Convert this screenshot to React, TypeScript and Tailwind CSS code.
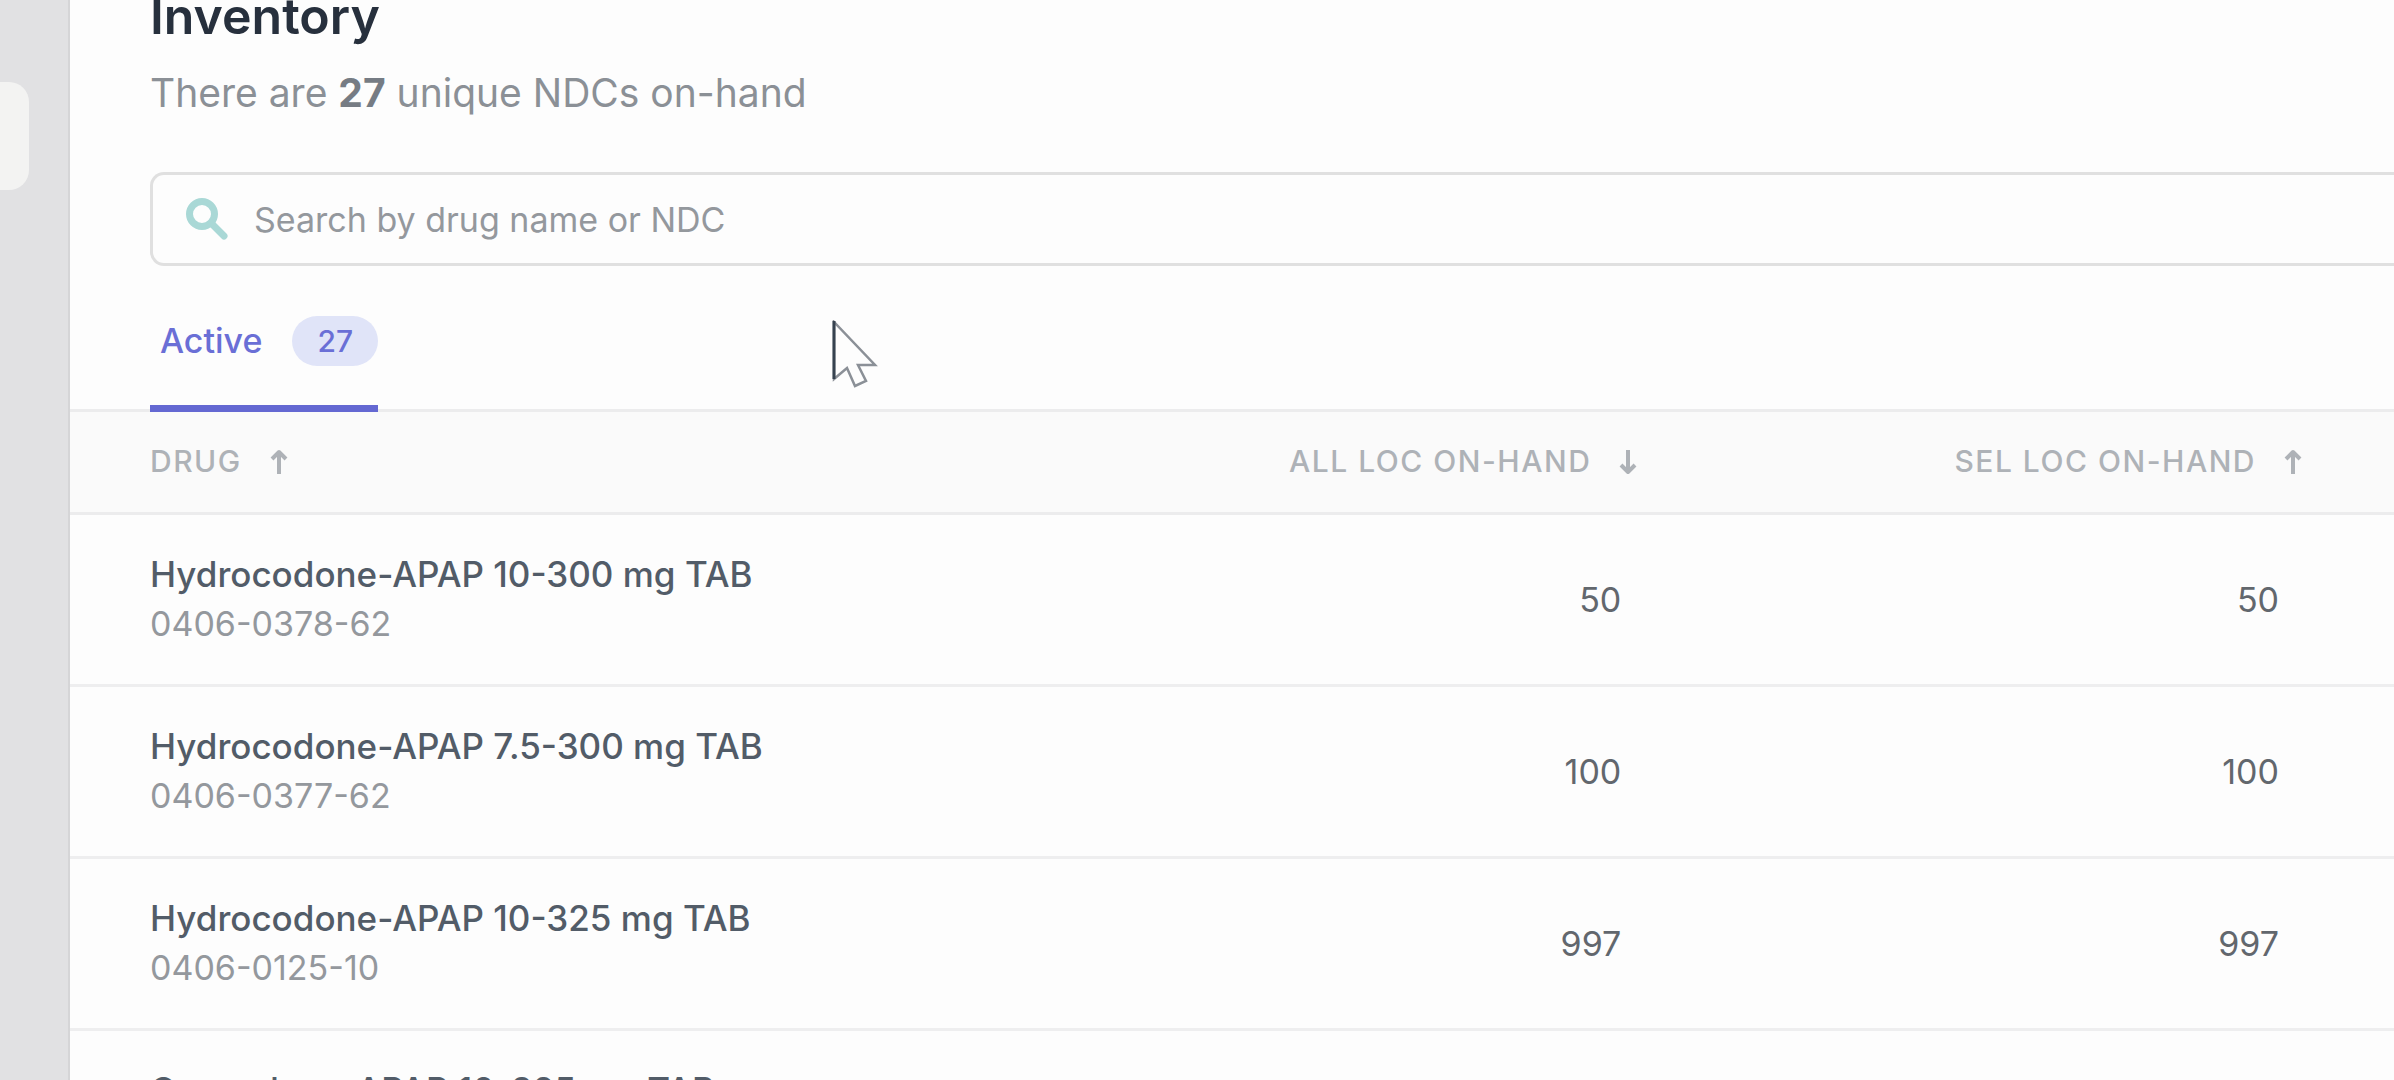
import { useState } from "react";

interface Drug {
  name: string;
  ndc: string;
  allLoc: number;
  selLoc: number;
}

const drugs: Drug[] = [
  { name: "Hydrocodone-APAP 10-300 mg TAB", ndc: "0406-0378-62", allLoc: 50, selLoc: 50 },
  { name: "Hydrocodone-APAP 7.5-300 mg TAB", ndc: "0406-0377-62", allLoc: 100, selLoc: 100 },
  { name: "Hydrocodone-APAP 10-325 mg TAB", ndc: "0406-0125-10", allLoc: 997, selLoc: 997 },
  { name: "Oxycodone-APAP 10-325 mg TAB", ndc: "0406-0523-01", allLoc: 100, selLoc: 100 },
];

const SortArrow = ({ down = false }: { down?: boolean }) => (
  <svg viewBox="0 0 18 26" className={down ? "w-[18px] h-[26px] rotate-180" : "w-[18px] h-[26px]"} fill="none" stroke="currentColor" strokeWidth="4" aria-hidden="true">
    <path d="M9 25V3" />
    <path d="M2 10l7-7 7 7" strokeLinejoin="round" />
  </svg>
);

const SearchIcon = () => (
  <svg viewBox="0 0 42 42" className="w-[42px] h-[42px] flex-shrink-0 text-[#a9d8d6]" fill="none" stroke="currentColor" aria-hidden="true">
    <circle cx="16" cy="16" r="12.5" strokeWidth="7" />
    <path d="M25 25l13 13" strokeWidth="7" strokeLinecap="round" />
  </svg>
);

const Pointer = () => (
  <svg viewBox="0 0 46 68" className="absolute left-[832px] top-[320px] w-[46px] h-[68px] pointer-events-none" fill="#fdfdfd" aria-hidden="true">
    <path d="M2 2v57l13-11 8 18 11-5-8-16h17z" stroke="#8b9097" strokeWidth="2.5" />
    <path d="M2 1v58" stroke="#36424f" strokeWidth="3" />
  </svg>
);

const DrugRow = ({ drug }: { drug: Drug }) => (
  <tr className="h-[172px] border-b-[3px] border-[#eeeeef]">
    <td className="pl-20">
      <p className="text-[35px] leading-[50px] font-medium text-[#525c68]">{drug.name}</p>
      <p className="text-[34px] leading-[50px] text-[#94989d]">{drug.ndc}</p>
    </td>
    <td className="pr-[115px] text-right text-[34px] text-[#62676d]">{drug.allLoc}</td>
    <td className="pr-[115px] text-right text-[34px] text-[#62676d]">{drug.selLoc}</td>
  </tr>
);

const App = () => {
  const [query, setQuery] = useState("");

  return (
    <div className="relative flex h-screen overflow-hidden bg-[#fdfdfd] font-['Inter',sans-serif]">
      <aside className="w-[70px] flex-shrink-0 border-r-2 border-[#d5d5d7] bg-[#e1e1e3] pt-[82px]">
        <button type="button" aria-label="Inventory" className="block h-[108px] w-[29px] rounded-r-[20px] bg-[#f3f3f2]" />
      </aside>
      <main className="min-w-0 flex-1">
        <header className="pl-20">
          <h1 className="text-[50px] leading-8 font-semibold text-[#27303d]">Inventory</h1>
          <p className="mt-[31px] text-[39px] leading-[60px] text-[#8b9096]">
            There are <strong className="font-bold text-[#767c84]">27</strong> unique NDCs on-hand
          </p>
          <label className="mt-[49px] flex h-[94px] items-center gap-[26px] rounded-l-[14px] border-[3px] border-r-0 border-[#e0e0e0] pl-[33px]">
            <SearchIcon />
            <input
              type="text"
              value={query}
              onChange={(e) => setQuery(e.target.value)}
              placeholder="Search by drug name or NDC"
              aria-label="Search by drug name or NDC"
              className="min-w-0 flex-1 bg-transparent text-[34px] text-[#525c68] outline-none placeholder:text-[#94989d]"
            />
          </label>
        </header>
        <nav className="flex border-b-[3px] border-[#ececed] pl-20">
          <button type="button" className="-mb-[3px] flex items-center gap-[30px] border-b-[7px] border-[#6468d2] pt-[50px] pb-[39px] pl-[10px] text-[34px] leading-[50px] font-medium text-[#6a6fd6]">
            Active
            <span className="rounded-full bg-[#e0e4f8] px-[25px] text-[30px] leading-[50px]">27</span>
          </button>
        </nav>
        <table className="w-full table-fixed border-collapse">
          <thead>
            <tr className="h-[101px] border-b-[3px] border-[#ececed] bg-[#fafafa] text-[30px] text-[#aeb2b7]">
              <th scope="col" className="pl-20">
                <button type="button" className="flex items-center gap-[28px] font-medium tracking-wider">
                  DRUG
                  <SortArrow />
                </button>
              </th>
              <th scope="col" className="w-[28.3%] pr-[99px]">
                <button type="button" className="ml-auto flex items-center gap-[28px] font-medium tracking-wider whitespace-nowrap">
                  ALL LOC ON-HAND
                  <SortArrow down />
                </button>
              </th>
              <th scope="col" className="w-[28.3%] pr-[92px]">
                <button type="button" className="ml-auto flex items-center gap-[28px] font-medium tracking-wider whitespace-nowrap">
                  SEL LOC ON-HAND
                  <SortArrow />
                </button>
              </th>
            </tr>
          </thead>
          <tbody>
            {drugs.map((drug) => (
              <DrugRow key={drug.ndc} drug={drug} />
            ))}
          </tbody>
        </table>
      </main>
      <Pointer />
    </div>
  );
};

export default App;
